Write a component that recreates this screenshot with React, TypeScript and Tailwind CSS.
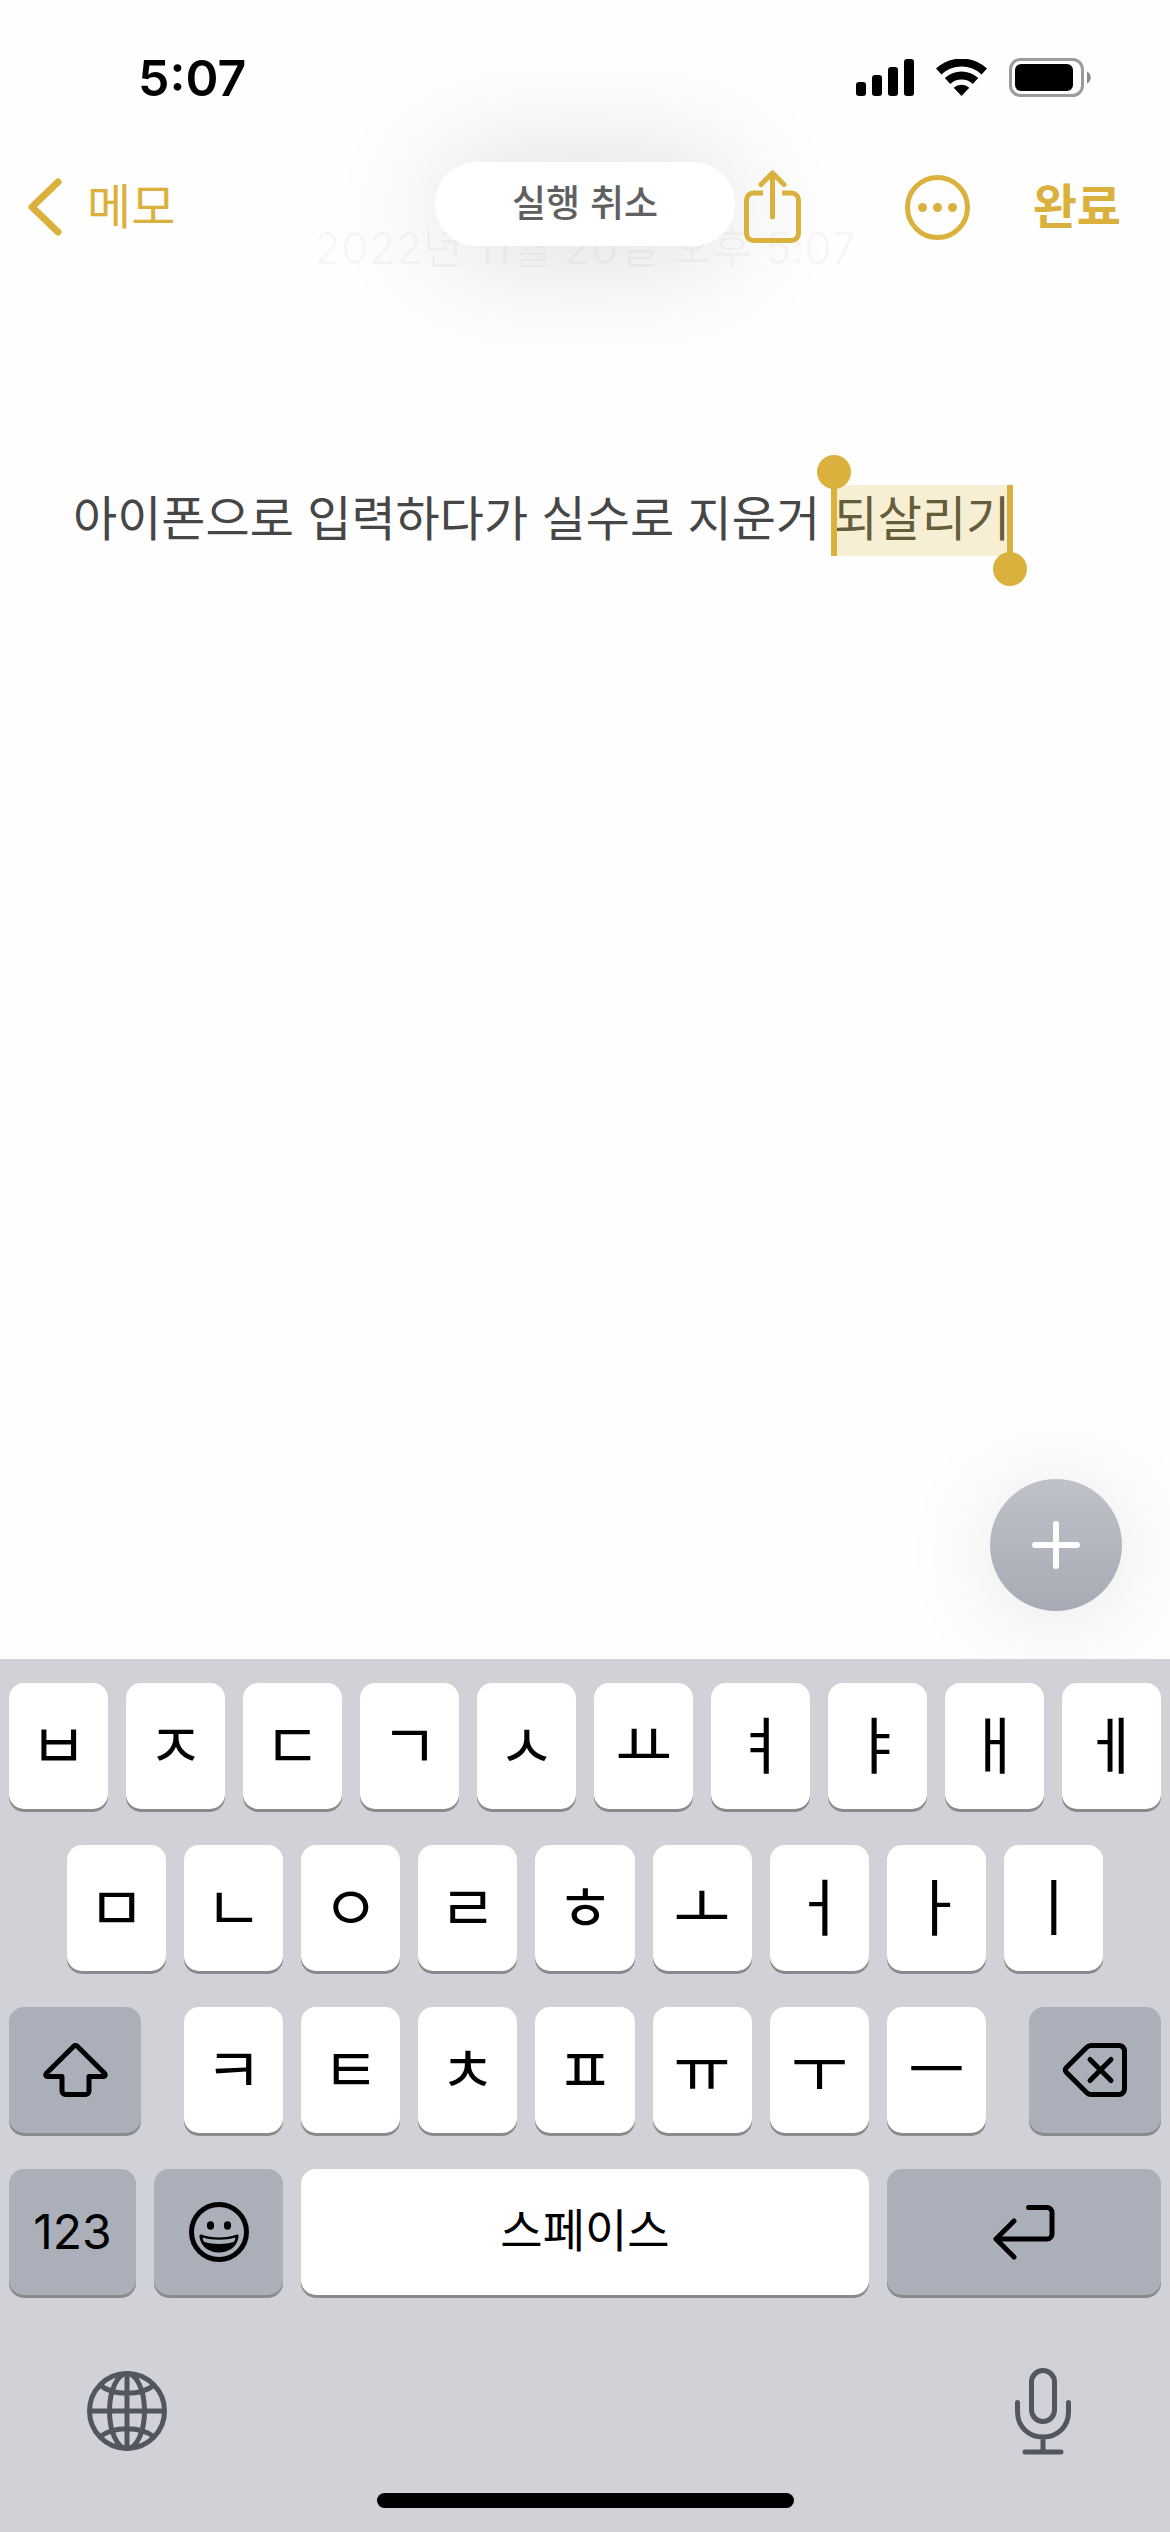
import type { ReactNode } from "react";

const ROW_1 = ["ㅂ", "ㅈ", "ㄷ", "ㄱ", "ㅅ", "ㅛ", "ㅕ", "ㅑ", "ㅐ", "ㅔ"];
const ROW_2 = ["ㅁ", "ㄴ", "ㅇ", "ㄹ", "ㅎ", "ㅗ", "ㅓ", "ㅏ", "ㅣ"];
const ROW_3 = ["ㅋ", "ㅌ", "ㅊ", "ㅍ", "ㅠ", "ㅜ", "ㅡ"];

export default function App() {
  return (
    <div className="flex min-h-screen flex-col bg-[#fefefe] font-['Inter','Noto_Sans_CJK_KR',sans-serif] text-black">
      <StatusBar />
      <NavBar />
      <Note />
      <Keyboard />
    </div>
  );
}

function StatusBar() {
  return (
    <div className="flex h-[140px] items-center justify-between pt-4 pr-[78px] pl-[138px]">
      <span className="text-[50px] font-semibold">5:07</span>

      <div className="flex items-center gap-[22px]">
        {/* SIGNAL */}
        <svg width="58" height="38" viewBox="0 0 58 38">
          <rect x="0" y="23" width="10" height="14" rx="3" />
          <rect x="16" y="16" width="10" height="21" rx="3" />
          <rect x="32" y="8" width="10" height="29" rx="3" />
          <rect x="48" y="0" width="10" height="37" rx="3" />
        </svg>

        {/* WIFI */}
        <svg width="51" height="38" viewBox="0 0 51 38">
          <path d="M2.7 12.5a33.5 33.5 0 0 1 45.6 0" fill="none" stroke="#000" strokeWidth="8" />
          <path d="M11.5 22a20.5 20.5 0 0 1 28 0" fill="none" stroke="#000" strokeWidth="8" />
          <path d="M25.5 37l-7.8-8.3a11.5 11.5 0 0 1 15.6 0z" />
        </svg>

        {/* BATTERY */}
        <svg width="83" height="40" viewBox="0 0 83 40">
          <rect x="1.5" y="1.5" width="72" height="36" rx="10" fill="none" stroke="#9b9b9b" strokeWidth="3" />
          <rect x="6" y="6" width="58" height="27" rx="6" />
          <path d="M78 13.5c5 2 5 10 0 12z" fill="#8c8c8c" />
        </svg>
      </div>
    </div>
  );
}

function NavBar() {
  return (
    <header className="relative flex h-[134px] items-center justify-between pr-[49px] pl-7 text-[#dab13c]">
      {/* date scrolled under the bar */}
      <p className="absolute inset-x-0 top-[76px] text-center text-[44px] leading-[64px] text-black/3">
        2022년 11월 20일 오후 5:07
      </p>

      {/* UNDO TOAST */}
      <div className="absolute inset-x-0 top-[22px] flex justify-center">
        <button className="h-[84px] w-[300px] rounded-full bg-white/95 text-[37px] font-medium text-[#606060] shadow-[0_4px_120px_rgba(0,0,0,0.16)]">
          실행 취소
        </button>
      </div>

      <button className="relative flex items-center gap-[25px] text-[48px]">
        <svg width="34" height="58" viewBox="0 0 34 58" fill="none" stroke="currentColor" strokeWidth="7" strokeLinecap="round" strokeLinejoin="round">
          <path d="M30 4L4 29l26 25" />
        </svg>
        메모
      </button>

      <div className="relative flex items-center">
        <button aria-label="공유" className="mr-[103px]">
          <svg width="59" height="74" viewBox="0 0 59 74" fill="none" stroke="currentColor" strokeWidth="5" strokeLinecap="round" strokeLinejoin="round">
            <path d="M29.5 47V4M18 14.500L29.500 3l11.500 11.500" />
            <path d="M20 23h-9.500a7 7 0 0 0-7 7v33.500a7 7 0 0 0 7 7h38a7 7 0 0 0 7-7V30a7 7 0 0 0-7-7H39" strokeLinecap="butt" />
          </svg>
        </button>
        <button aria-label="더 보기" className="mr-[63px]">
          <svg width="65" height="65" viewBox="0 0 65 65" fill="currentColor">
            <circle cx="32.5" cy="32.5" r="30" fill="none" stroke="currentColor" strokeWidth="5" />
            <circle cx="17.500" cy="32.500" r="4.500" />
            <circle cx="32.500" cy="32.500" r="4.500" />
            <circle cx="47.500" cy="32.500" r="4.500" />
          </svg>
        </button>
        <button className="text-[48px] font-semibold">완료</button>
      </div>
    </header>
  );
}

function Note() {
  return (
    <main className="relative flex flex-1 flex-col overflow-hidden px-[73px] pt-[211px]">
      <div
        role="textbox"
        aria-label="메모 내용"
        contentEditable
        suppressContentEditableWarning
        className="text-[48px] leading-[67px] text-[#464646] outline-none"
      >
        아이폰으로 입력하다가 실수로 지운거{" "}
        <mark className="relative inline-block bg-[#f6efd3] pb-1 text-[#665d3a]">
          되살리기
          {/* selection handles */}
          <span className="absolute top-0 -left-[3px] h-full w-[6px] bg-[#dab13c]" />
          <span className="absolute -top-[30px] -left-[17px] size-[34px] rounded-full bg-[#dab13c]" />
          <span className="absolute top-0 -right-[3px] h-full w-[6px] bg-[#dab13c]" />
          <span className="absolute -right-[17px] -bottom-[30px] size-[34px] rounded-full bg-[#dab13c]" />
        </mark>
      </div>

      <button
        aria-label="추가"
        className="absolute right-12 bottom-12 flex size-[132px] items-center justify-center rounded-full bg-linear-to-b from-[#bfc2c7] to-[#a6abb5] shadow-[0_8px_100px_rgba(0,0,0,0.1)]"
      >
        <svg width="48" height="48" viewBox="0 0 48 48" stroke="#fff" strokeWidth="6" strokeLinecap="round">
          <path d="M24 3v42M3 24h42" />
        </svg>
      </button>
    </main>
  );
}

function Keyboard() {
  return (
    <div className="flex flex-col bg-[#d1d2d8] px-[9px] pt-6">
      <div className="flex flex-col gap-9">
        <div className="flex gap-[18px]">
          {ROW_1.map((k) => (
            <Key key={k}>{k}</Key>
          ))}
        </div>

        <div className="flex gap-[18px] px-[58px]">
          {ROW_2.map((k) => (
            <Key key={k}>{k}</Key>
          ))}
        </div>

        <div className="flex gap-[43px]">
          <Key dark label="시프트" width="w-[132px]">
            <svg width="65" height="56" viewBox="0 0 65 56" fill="none" stroke="#000" strokeWidth="5" strokeLinecap="round" strokeLinejoin="round">
              <path d="M30.700 4.200a2.600 2.600 0 0 1 3.600 0L61.300 31c1.600 1.700 1 3.500-1 3.500H46v14.500a3.500 3.500 0 0 1-3.500 3.500h-20a3.500 3.500 0 0 1-3.500-3.500V34.500H4.700c-2 0-2.600-1.800-1-3.500z" />
            </svg>
          </Key>
          <div className="flex flex-1 gap-[18px]">
            {ROW_3.map((k) => (
              <Key key={k}>{k}</Key>
            ))}
          </div>
          <Key dark label="지우기" width="w-[132px]">
            <svg width="67" height="56" viewBox="0 0 67 56" fill="none" stroke="#000" strokeWidth="5" strokeLinecap="round" strokeLinejoin="round">
              <path d="M29 3.500h28a5.500 5.500 0 0 1 5.500 5.500v38a5.500 5.500 0 0 1-5.500 5.500H29c-1.600 0-3-.6-4.200-1.800L4.500 30.500c-1.400-1.500-1.400-3.500 0-5L24.800 5.300C26 4.100 27.400 3.500 29 3.500z" />
              <path d="M28 17.500l21 21M49 17.500l-21 21" />
            </svg>
          </Key>
        </div>

        <div className="flex gap-[18px]">
          <Key dark width="w-[127px]">
            <span className="text-[48px]">123</span>
          </Key>
          <Key dark label="이모티콘" width="w-[129px]">
            <svg width="60" height="60" viewBox="0 0 60 60">
              <circle cx="30" cy="30" r="27.500" fill="none" stroke="#000" strokeWidth="5" />
              <ellipse cx="21.500" cy="23.500" rx="3.600" ry="4.200" />
              <ellipse cx="38.500" cy="23.500" rx="3.600" ry="4.200" />
              <path d="M12 32.500c11 4 25 4 36 0 2 0 1.600 2 1.200 4C47.500 45 39.500 50.500 30 50.500S12.500 45 10.800 36.500c-.4-2-.8-4 1.200-4z" />
              <path d="M13.500 35.500c10 3 23 3 33 0-.2 1.700-.7 3-1.500 4.200-9 3-21 3-30 0-.8-1.200-1.300-2.500-1.500-4.200z" fill="#abafba" />
            </svg>
          </Key>
          <Key>
            <span className="pb-1 text-[46px]">스페이스</span>
          </Key>
          <Key dark label="줄바꿈" width="w-[274px]">
            <svg width="64" height="56" viewBox="0 0 64 56" fill="none" stroke="#000" strokeWidth="5" strokeLinecap="round" strokeLinejoin="round">
              <path d="M36.500 3.500H55a5 5 0 0 1 5 5V30a5 5 0 0 1-5 5H4M22 17L4 35l18 18" />
            </svg>
          </Key>
        </div>
      </div>

      <div className="flex items-center justify-between px-[77px] pt-[72px] text-[#53565c]">
        <button aria-label="키보드 변경">
          <svg width="82" height="82" viewBox="0 0 82 82" fill="none" stroke="currentColor" strokeWidth="5">
            <circle cx="41" cy="41" r="37.500" />
            <ellipse cx="41" cy="41" rx="17.500" ry="37.500" />
            <path d="M41 3.500v75M3.500 41h75M14 15c13 11 41 11 54 0M14 67c13-11 41-11 54 0" />
          </svg>
        </button>
        <button aria-label="받아쓰기" className="mr-3">
          <svg width="58" height="88" viewBox="0 0 58 88" fill="none" stroke="currentColor" strokeWidth="5" strokeLinecap="round">
            <rect x="17.500" y="3.500" width="23" height="51" rx="11.500" />
            <path d="M3.500 35.500V45c0 14.500 11 25 25.500 25s25.500-10.500 25.500-25v-9.500M29 70v15M11 85h36" />
          </svg>
        </button>
      </div>

      {/* HOME INDICATOR */}
      <div className="mt-[38px] mb-6 h-[15px] w-[417px] self-center rounded-full bg-black" />
    </div>
  );
}

function Key({
  children,
  dark,
  label,
  width = "flex-1",
}: {
  children: ReactNode;
  dark?: boolean;
  label?: string;
  width?: string;
}) {
  return (
    <button
      aria-label={label}
      className={`flex h-[126px] items-center justify-center rounded-[15px] text-[62px] shadow-[0_3px_0_#898a8d]
      ${width} ${dark ? "bg-[#abafba]" : "bg-white"}`}
    >
      {children}
    </button>
  );
}
